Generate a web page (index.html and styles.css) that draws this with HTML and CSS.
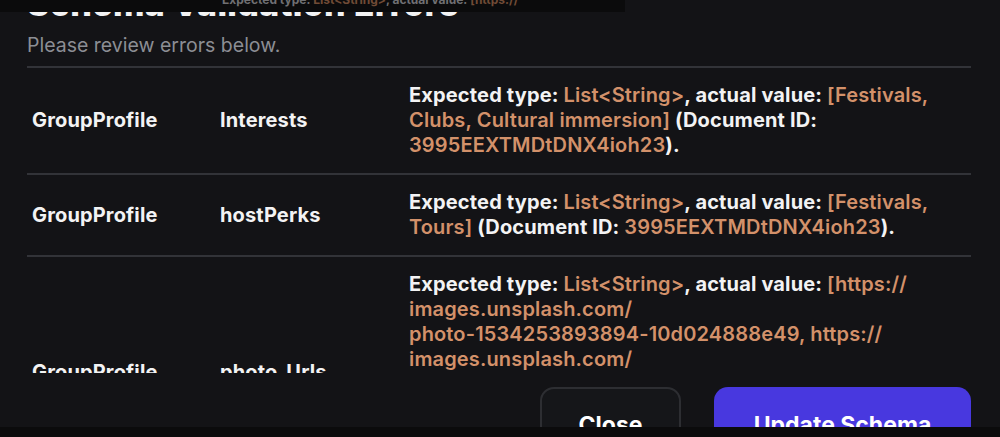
FILE: index.html
```
<!DOCTYPE html>
<html lang="en">
<head>
    <meta charset="UTF-8">
    <meta name="viewport" content="width=device-width, initial-scale=1.0">
    <title>Schema Validation Errors</title>
    <link rel="stylesheet" href="styles.css">
</head>
<body>
    <div class="top-peek">
        <span>Expected type: <em>List&lt;String&gt;</em>, actual value: <em>[https://</em></span>
    </div>

    <div class="dialog">
        <header class="dialog-header">
            <h1>Schema Validation Errors</h1>
            <p class="subtitle">Please review errors below.</p>
        </header>

        <div class="errors-scroll">
            <div class="error-row">
                <div class="cell">GroupProfile</div>
                <div class="cell">Interests</div>
                <div class="cell message">Expected type: <span class="hl">List&lt;String&gt;</span>, actual value: <span class="hl">[Festivals, Clubs, Cultural immersion]</span> (Document ID: <span class="hl">3995EEXTMDtDNX4ioh23</span>).</div>
            </div>
            <div class="error-row">
                <div class="cell">GroupProfile</div>
                <div class="cell">hostPerks</div>
                <div class="cell message">Expected type: <span class="hl">List&lt;String&gt;</span>, actual value: <span class="hl">[Festivals, Tours]</span> (Document ID: <span class="hl">3995EEXTMDtDNX4ioh23</span>).</div>
            </div>
            <div class="error-row">
                <div class="cell">GroupProfile</div>
                <div class="cell">photo_Urls</div>
                <div class="cell message">Expected type: <span class="hl">List&lt;String&gt;</span>, actual value: <span class="hl">[<span class="nw">https://</span><wbr><span class="nw">images.unsplash.com/</span><wbr><span class="nw">photo-1534253893894-10d024888e49,</span> <span class="nw">https://</span><wbr><span class="nw">images.unsplash.com/</span><wbr><span class="nw">photo-1506905925346-21bda4d32df4,</span> <span class="nw">https://</span><wbr><span class="nw">images.unsplash.com/</span><wbr><span class="nw">photo-1469474968028-56623f02e42e]</span></span> (Document ID: <span class="hl">3995EEXTMDtDNX4ioh23</span>).</div>
            </div>
        </div>

        <footer class="dialog-footer">
            <button class="btn btn-close">Close</button>
            <button class="btn btn-primary">Update Schema</button>
        </footer>
    </div>

    <div class="bottom-edge"></div>
</body>
</html>
```
FILE: styles.css
```
body {
    font-family: Inter, "Noto Sans", sans-serif;
    background-color: #131316;
    color: #f3f3f4;
    margin: 0;
    height: 437px;
    overflow: hidden;
    position: relative;
}

.top-peek {
    position: absolute;
    top: 0;
    left: 0;
    width: 625px;
    height: 12px;
    background-color: #0b0b0c;
    overflow: hidden;
    z-index: 2;
}

.top-peek span {
    display: block;
    margin: -8px 0 0 222px;
    font-size: 12px;
    font-weight: 700;
    line-height: 16px;
    color: #707073;
}

.top-peek em {
    font-style: normal;
    color: #714b36;
}

.dialog {
    padding: 0 29px 0 27px;
}

.dialog-header {
    border-bottom: 2px solid #323338;
    padding-bottom: 9px;
}

.dialog-header h1 {
    font-size: 34px;
    font-weight: 800;
    line-height: 40px;
    letter-spacing: 0.3px;
    margin: -16px 0 0;
}

.subtitle {
    font-size: 19.5px;
    line-height: 24px;
    color: #8c8e94;
    margin: 9px 0 0;
}

.errors-scroll {
    height: 305px;
    overflow: hidden;
}

.error-row {
    display: grid;
    grid-template-columns: 188px 189px 1fr;
    align-items: center;
    padding: 15px 22px 15px 5px;
    border-bottom: 2px solid #323338;
}

.cell {
    font-size: 20px;
    font-weight: 700;
    line-height: 25px;
    letter-spacing: 0.15px;
}

.hl {
    color: #d3916a;
    font-weight: 600;
}

.nw {
    white-space: nowrap;
}

.dialog-footer {
    display: flex;
    justify-content: flex-end;
    gap: 33px;
    padding-top: 14px;
}

.btn {
    height: 76px;
    border-radius: 14px;
    font-family: inherit;
    font-size: 23px;
    font-weight: 700;
    color: #fff;
    cursor: pointer;
}

.btn-close {
    width: 141px;
    background-color: #151619;
    border: 2px solid #2d2e32;
}

.btn-primary {
    width: 257px;
    background-color: #4838df;
    border: none;
}

.bottom-edge {
    position: absolute;
    left: 0;
    right: 0;
    bottom: 0;
    height: 10px;
    background-color: #0b0b0c;
}
```
